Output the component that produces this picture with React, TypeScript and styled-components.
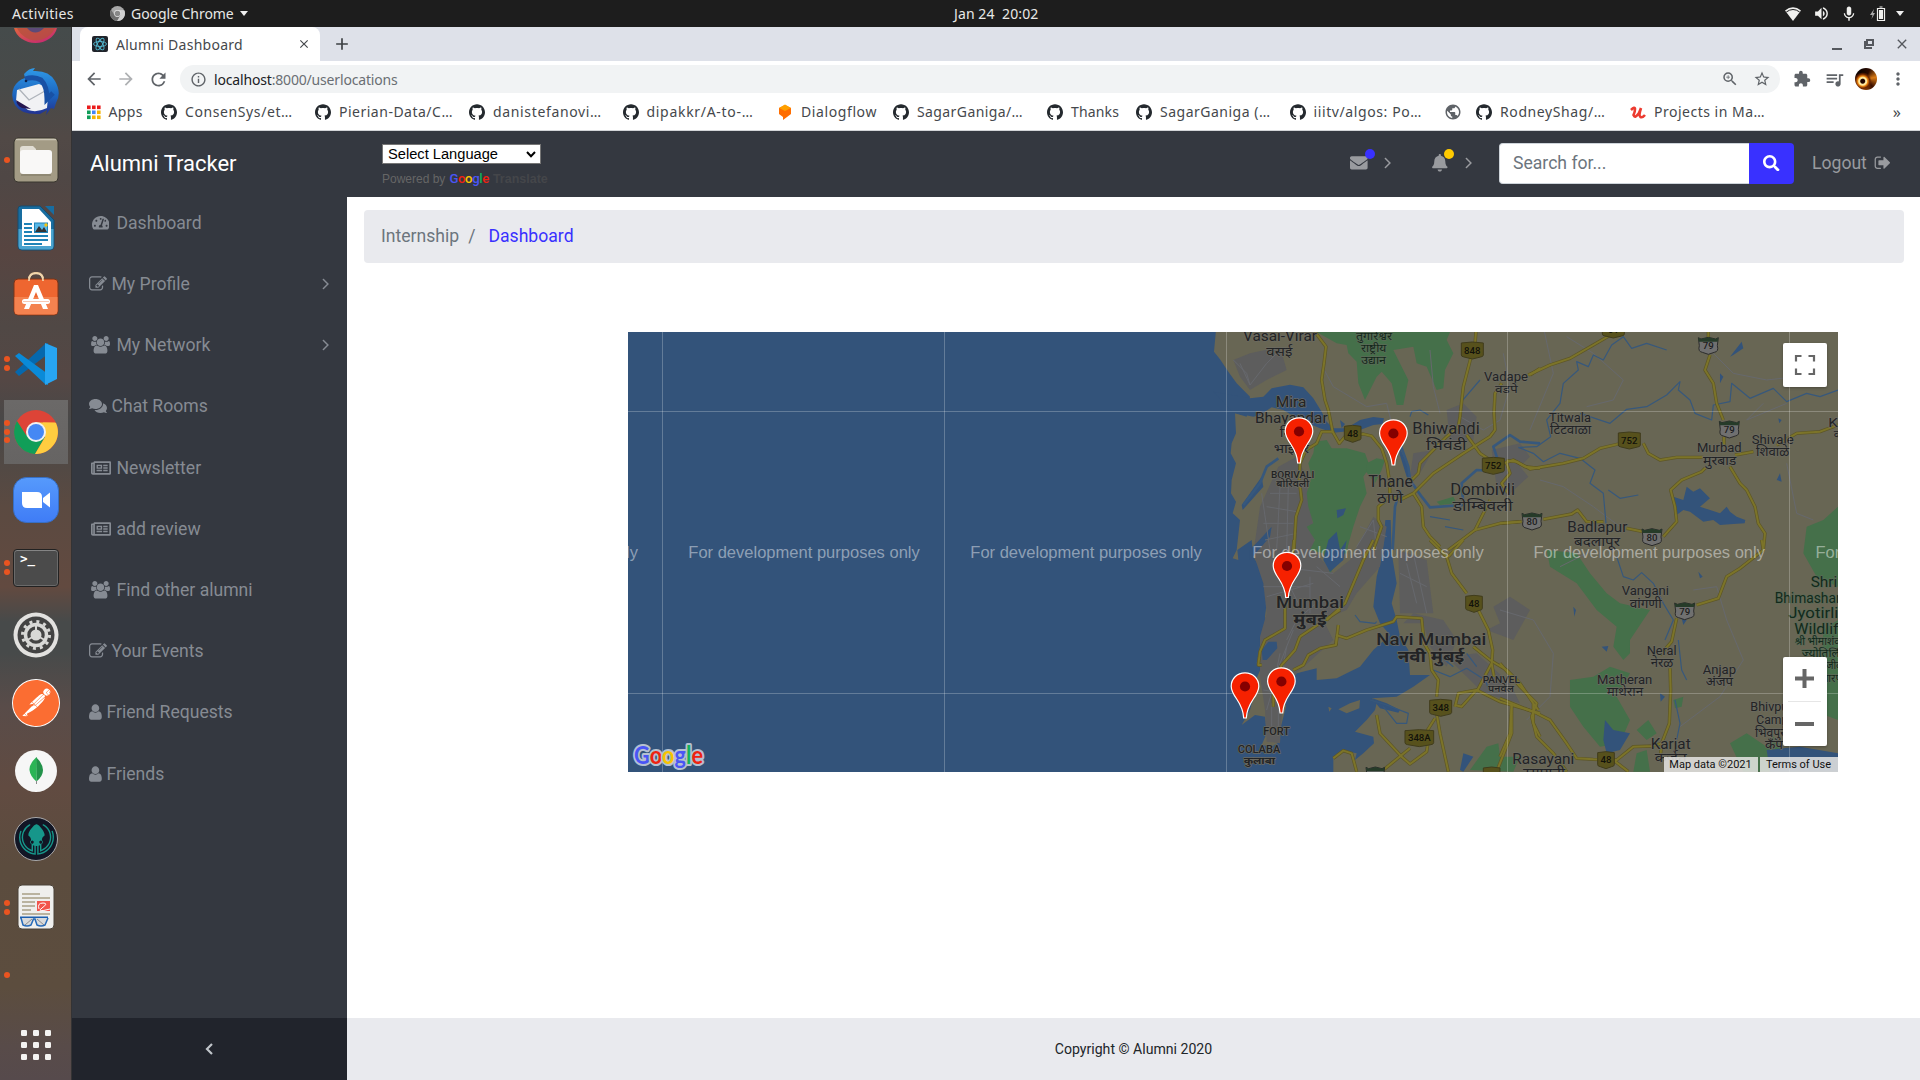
import React from "react";
import styled, { createGlobalStyle } from "styled-components";
import { FaBell, FaComments, FaEnvelope, FaRegNewspaper, FaSearch, FaTachometerAlt } from "react-icons/fa";
import {
  MdArrowBack, MdArrowForward, MdClose, MdExtension, MdInfoOutline, MdMic, MdMoreVert,
  MdPublic, MdQueueMusic, MdRefresh, MdStarBorder, MdVolumeUp, MdZoomIn, MdAdd,
} from "react-icons/md";
import { SiGithub, SiPostman, SiGitkraken } from "react-icons/si";

const UI = `"Noto Sans", "Open Sans", sans-serif`;
const APP = `Roboto, "Liberation Sans", sans-serif`;

const Global = createGlobalStyle`
  *, *::before, *::after { box-sizing: border-box; }
  html, body { margin: 0; background: #fff; }
  svg { display: block; flex: none; }
`;

const Desktop = styled.div`
  width: 1920px;
  height: 1080px;
  display: grid;
  grid-template: 27px 1053px / 72px 1848px;
  overflow: hidden;
  white-space: nowrap;
  font-family: ${UI};
`;

/* ---------- system bar ---------- */
const SystemBar = styled.header`
  grid-column: 1 / 3;
  display: grid;
  grid-template-columns: 954px 100px 1fr;
  align-items: center;
  background: #1d1d1d;
  color: #e8e8e6;
  font-size: 14px;
`;
const BarLeft = styled.div`
  display: flex;
  align-items: center;
  padding-left: 12px;
`;
const BarText = styled.span<{ $w?: number; $ls?: number }>`
  width: ${(p) => (p.$w ? `${p.$w}px` : "auto")};
  letter-spacing: ${(p) => p.$ls ?? 0}px;
  text-align: left;
  white-space: pre;
`;
const BarAppIcon = styled.span`
  margin: 0 6px 0 0;
`;
const Caret = styled.i<{ $ml: number }>`
  margin-left: ${(p) => p.$ml}px;
  border: 4.5px solid transparent;
  border-top: 5.5px solid #f0f0f0;
  border-bottom: 0;
`;
const Tray = styled.div`
  display: flex;
  align-items: center;
  justify-content: flex-end;
  padding-right: 16px;
  color: #f0f0ee;
`;
const TraySlot = styled.span<{ $w: number }>`
  width: ${(p) => p.$w}px;
  display: flex;
  justify-content: center;
`;

/* ---------- dock ---------- */
const Dock = styled.aside`
  display: flex;
  flex-direction: column;
  border-right: 1px solid #343334;
  background: linear-gradient(#454b4b 0, #484a49 60px, #514946 110px, #4f4745 150px, #574541 225px, #504845 300px,
    #554744 350px, #484848 395px, #5b4a41 480px, #624a40 560px, #474a4a 595px, #474a4a 625px, #594c49 680px,
    #614b41 760px, #5b4c3e 840px, #5c4d3e 960px, #584b49 1020px, #564a4c 1053px);
`;
const DockItem = styled.div<{ $h?: number; $on?: boolean }>`
  height: ${(p) => p.$h ?? 68}px;
  display: grid;
  grid-template-columns: 6px 60px;
  padding-left: 4px;
  align-items: center;
  background: ${(p) => (p.$on ? "linear-gradient(#6b6968,#666463) 4px 2px / 64px 64px no-repeat" : "none")};
`;
const Dots = styled.div`
  display: grid;
  gap: 2.7px;
  justify-items: start;
`;
const Dot = styled.i`
  width: 6px;
  height: 6px;
  border-radius: 50%;
  background: #ea5420;
`;
const DockArt = styled.div<{ $lift?: number }>`
  display: flex;
  justify-content: center;
  padding-right: 8px;
  padding-bottom: ${(p) => p.$lift ?? 0}px;
`;

/* ---------- browser ---------- */
const Browser = styled.main`
  display: grid;
  grid-template-rows: 34px 36px 34px 949px;
  min-width: 0;
`;
const TabStrip = styled.div`
  display: flex;
  align-items: center;
  padding-left: 8px;
  background: #dee1e9;
  color: #3c4043;
`;
const Tab = styled.div`
  width: 240px;
  height: 34px;
  display: flex;
  align-items: center;
  padding: 0 9px 0 12px;
  border-radius: 8px 8px 0 0;
  background: #fff;
  font-size: 14px;
  color: #45484c;
`;
const TabTitle = styled.span`
  flex: 1;
  margin-left: 8px;
  letter-spacing: 0.27px;
`;
const NewTab = styled.div`
  margin-left: 12px;
  flex: 1;
`;
const WinControls = styled.div`
  display: flex;
  gap: 17px;
  padding-right: 10px;
  color: #55585e;
`;
const Toolbar = styled.div`
  display: flex;
  align-items: center;
  padding-left: 12px;
  background: #fff;
  color: #5f6368;
`;
const ToolSlot = styled.span<{ $w?: number; $faded?: boolean }>`
  width: ${(p) => p.$w ?? 32}px;
  display: flex;
  justify-content: center;
  opacity: ${(p) => (p.$faded ? 0.5 : 1)};
`;
const Omnibox = styled.div`
  width: 1600px;
  height: 28px;
  margin: 0 6px 0 6px;
  display: flex;
  align-items: center;
  padding: 0 2px 0 10px;
  border-radius: 14px;
  background: #f1f3f4;
`;
const Url = styled.span`
  flex: 1;
  margin-left: 7px;
  font-size: 14px;
  letter-spacing: -0.17px;
  color: #6a6e73;
  b { font-weight: 400; color: #202124; }
`;
const Avatar = styled.i`
  width: 22px;
  height: 22px;
  border-radius: 50%;
  background: radial-gradient(circle at 35% 60%, #200400 0 2px, #ffe9a0 3px 4px, #f28a12 5px, #6b2400 7px, transparent 9px),
    conic-gradient(from 20deg, #2a0a00, #d97a14, #3a0f00, #a8520c, #1c0400, #0c0200, #2a0a00);
`;
const Bookmarks = styled.nav`
  display: flex;
  align-items: center;
  padding: 0 0 4px 14.5px;
  border-bottom: 1px solid #d3d5d8;
  background: #fff;
  color: #45484c;
  font-size: 14px;
`;
const Bookmark = styled.span<{ $w: number; $ls?: number }>`
  width: ${(p) => p.$w}px;
  display: flex;
  align-items: center;
  gap: 8px;
  letter-spacing: ${(p) => p.$ls ?? 0}px;
`;
const More = styled.span`
  margin-left: auto;
  padding-right: 19px;
  font-size: 16px;
`;

/* ---------- application ---------- */
const Page = styled.div`
  display: grid;
  grid-template: 66px 821px 62px / 275px 1573px;
  font-family: ${APP};
  font-size: 17.6px;
  background: #fff;
`;
const Navbar = styled.header`
  grid-column: 1 / 3;
  display: flex;
  align-items: center;
  padding: 0 0 2px 18px;
  background: #343840;
  color: #999b9f;
`;
const Brand = styled.h1`
  width: 292px;
  margin: 0;
  font-size: 22px;
  font-weight: 400;
  color: #fff;
`;
const Translate = styled.div`
  width: 968px;
  height: 42px;
  display: flex;
  flex-direction: column;
  align-items: flex-start;
  padding-top: 2px;
  font: 12px "Liberation Sans", Arial, sans-serif;
  color: #666;
`;
const Select = styled.div`
  width: 159px;
  height: 20px;
  flex: none;
  display: flex;
  align-items: center;
  justify-content: space-between;
  padding: 0 4px 0 5px;
  border: 1px solid #767676;
  background: #fff;
  color: #000;
  font-size: 14.67px;
`;
const Powered = styled.div`
  display: flex;
  align-items: baseline;
  margin-top: 7px;
`;
const MiniGoogle = styled.span`
  margin: 0 4px 0 4px;
  font: 500 13.2px Roboto, sans-serif;
  letter-spacing: -0.4px;
`;
const Tint = styled.span<{ $c: string }>`
  color: ${(p) => p.$c};
`;
const TranslateWord = styled.b`
  color: #44464a;
  font-size: 12.5px;
`;
const Notice = styled.div<{ $w: number; $gap: number }>`
  width: ${(p) => p.$w}px;
  display: flex;
  align-items: center;
  gap: ${(p) => p.$gap}px;
`;
const IconWithBadge = styled.span`
  position: relative;
`;
const Badge = styled.i<{ $c: string; $x: number; $y: number }>`
  position: absolute;
  left: ${(p) => p.$x}px;
  top: ${(p) => p.$y}px;
  width: 10px;
  height: 10px;
  border-radius: 50%;
  background: ${(p) => p.$c};
`;
const SearchBox = styled.div`
  width: 250px;
  height: 41px;
  display: flex;
  align-items: center;
  padding-left: 13px;
  border: 1px solid #ced4da;
  border-right: 0;
  border-radius: 4px 0 0 4px;
  background: #fff;
  color: #6c757d;
`;
const SearchButton = styled.div`
  width: 45px;
  height: 41px;
  display: flex;
  align-items: center;
  justify-content: center;
  border-radius: 0 4px 4px 0;
  background: #3931ff;
  color: #fff;
`;
const Logout = styled.div`
  display: flex;
  align-items: center;
  gap: 7px;
  margin-left: 18px;
`;
const Sidebar = styled.nav`
  background: #343840;
  color: #868b93;
`;
const NavItem = styled.a`
  height: 61.2px;
  display: flex;
  align-items: center;
  padding: 0 17px 9.5px 17px;
`;
const NavIcon = styled.span<{ $w: number }>`
  width: ${(p) => p.$w}px;
  display: flex;
  justify-content: center;
  margin-right: 4.5px;
`;
const NavLabel = styled.span`
  flex: 1;
`;
const Content = styled.section`
  display: flex;
  flex-direction: column;
  padding: 13px 16px 0 17px;
`;
const Breadcrumb = styled.div`
  height: 53px;
  display: flex;
  align-items: center;
  gap: 9px;
  padding: 0 17px 2px;
  border-radius: 4px;
  background: #e9eaee;
  color: #6c757d;
`;
const Current = styled.span`
  margin-left: 4px;
  color: #3931ff;
`;
const MapFrame = styled.div`
  position: relative;
  width: 1210px;
  height: 440px;
  margin: 69px 0 0 264px;
  overflow: hidden;
  font-family: ${APP};
`;
const MapButtons = styled.div<{ $y: number; $h: number }>`
  position: absolute;
  left: 1155px;
  top: ${(p) => p.$y}px;
  width: 44px;
  height: ${(p) => p.$h}px;
  border-radius: 2px;
  background: #fff;
  box-shadow: 0 1px 3px rgba(0, 0, 0, 0.3);
`;
const Legal = styled.div`
  position: absolute;
  right: 0;
  bottom: 0;
  height: 15px;
  display: flex;
  gap: 2px;
  font-size: 11px;
  line-height: 15.5px;
  color: #111;
`;
const LegalCell = styled.span<{ $w: number }>`
  width: ${(p) => p.$w}px;
  padding-right: 1px;
  text-align: center;
  background: rgba(228, 228, 226, 0.86);
`;
const Toggle = styled.div`
  display: flex;
  align-items: center;
  justify-content: center;
  background: #21242c;
  color: #c0c5ca;
`;
const Footer = styled.footer`
  display: flex;
  align-items: center;
  justify-content: center;
  background: #e9eaee;
  color: #212529;
  font-size: 14.1px;
`;

/* ---------- glyphs ---------- */
const EDIT = "M888 1184l116-116-152-152-116 116v56h96v96h56zm440-720q-16-16-33 1l-350 350q-17 17-1 33t33-1l350-350q17-17 1-33zm80 594v190q0 119-84.5 203.5t-203.5 84.5h-832q-119 0-203.5-84.5t-84.5-203.5v-832q0-119 84.5-203.5t203.5-84.5h832q63 0 117 25 15 7 18 23 3 17-9 29l-49 49q-14 14-32 8-23-6-45-6h-832q-66 0-113 47t-47 113v832q0 66 47 113t113 47h832q66 0 113-47t47-113v-126q0-13 9-22l64-64q15-15 35-7t20 29zm-96-738l288 288-672 672h-288v-288zm444 132l-92 92-288-288 92-92q28-28 68-28t68 28l152 152q28 28 28 68t-28 68z";
const USER = "M1536 1399q0 109-62.5 187t-150.5 78h-854q-88 0-150.5-78t-62.5-187q0-85 8.5-160.5t31.5-152 58.5-131 94-89 134.5-34.5q131 128 313 128t313-128q76 0 134.5 34.5t94 89 58.5 131 31.5 152 8.5 160.5zm-256-887q0 159-112.5 271.5t-271.5 112.5-271.5-112.5-112.5-271.5 112.5-271.5 271.5-112.5 271.5 112.5 112.5 271.5z";
const USERS = "M593 896q-162 5-265 128h-134q-82 0-138-40.5t-56-118.5q0-353 124-353 6 0 43.5 21t97.5 42.5 119 21.5q67 0 133-23-5 37-5 66 0 159 93 256zm1071 637q0 120-73 189.5t-194 69.5h-874q-121 0-194-69.5t-73-189.5q0-53 3.5-103.5t14-109 26.5-108.5 43-97.5 62-81 85.5-53.5 111.5-20q10 0 43 21.5t73 48 107 48 135 21.5 135-21.5 107-48 73-48 43-21.5q61 0 111.5 20t85.5 53.5 62 81 43 97.5 26.5 108.5 14 109 3.5 103.5zm-1024-1277q0 106-75 181t-181 75-181-75-75-181 75-181 181-75 181 75 75 181zm704 384q0 159-112.5 271.5t-271.5 112.5-271.5-112.5-112.5-271.5 112.5-271.5 271.5-112.5 271.5 112.5 112.5 271.5zm576 225q0 78-56 118.5t-138 40.5h-134q-103-123-265-128 93-97 93-256 0-29-5-66 66 23 133 23 59 0 119-21.5t97.5-42.5 43.5-21q124 0 124 353zm-128-609q0 106-75 181t-181 75-181-75-75-181 75-181 181-75 181 75 75 181z";
const SIGN_OUT = "M704 1440q0 4 1 20t.5 26.5-3 23.5-10 19.5-20.5 6.5h-320q-119 0-203.5-84.5t-84.5-203.5v-704q0-119 84.5-203.5t203.5-84.5h320q13 0 22.5 9.5t9.5 22.5q0 4 1 20t.5 26.5-3 23.5-10 19.5-20.5 6.5h-320q-66 0-113 47t-47 113v704q0 66 47 113t113 47h312l11.5 1 11.5 3 8 5.5 7 9 2 13.5zm928-544q0 26-19 45l-544 544q-19 19-45 19t-45-19-19-45v-288h-448q-26 0-45-19t-19-45v-384q0-26 19-45t45-19h448v-288q0-26 19-45t45-19 45 19l544 544q19 19 19 45z";
const ANGLE = "M1171 960q0 13-10 23l-466 466q-10 10-23 10t-23-10l-50-50q-10-10-10-23t10-23l393-393-393-393q-10-10-10-23t10-23l50-50q10-10 23-10t23 10l466 466q10 10 10 23z";

const Glyph = ({ d, box = "0 0 1792 1792", w, h }: { d: string; box?: string; w: number; h: number }) => (
  <svg width={w} height={h} viewBox={box} fill="currentColor"><path d={d} /></svg>
);
const Edit = () => <Glyph d={EDIT} w={18} h={18} />;
const User = () => <Glyph d={USER} box="256 0 1280 1792" w={12.8} h={18} />;
const Users = () => <Glyph d={USERS} box="0 0 1920 1792" w={19} h={17.6} />;
const Angle = () => <Glyph d={ANGLE} box="540 310 700 1300" w={7.6} h={14} />;

const ChromeMark = ({ size, gray }: { size: number; gray?: boolean }) => {
  const c = gray ? ["#a8a8a8", "#6f6f6f", "#d0d0d0", "#888", "#e5e5e5"] : ["#dd4437", "#119e58", "#ffcd40", "#4588f4", "#f1f1f1"];
  return (
    <svg width={size} height={size} viewBox="0 0 44 44">
      <circle cx="22" cy="22" r="22" fill={c[0]} />
      <path d="M3 11 A22 22 0 0 0 21 44 L31 27 L22 22 L12 25Z" fill={c[1]} />
      <path d="M42 13 A22 22 0 0 1 21 44 L31 27 L29 12.500Z" fill={c[2]} />
      <path d="M22 12.500H42L29 19Z" fill={c[2]} />
      <circle cx="22" cy="22" r="10" fill={c[4]} />
      <circle cx="22" cy="22" r="8" fill={c[3]} />
    </svg>
  );
};

/* ---------- dock artwork ---------- */
const Fox = () => (
  <svg width="44" height="20" viewBox="0 0 44 20">
    <defs><linearGradient id="fx" x2="1" y2="1"><stop stopColor="#e0663e" /><stop offset="1" stopColor="#c2207a" /></linearGradient></defs>
    <path d="M0 0A22 19 0 0 0 43 0Z" fill="url(#fx)" />
    <path d="M3 0C8 10 18 14 26 12S38 6 41 0Z" fill="#b5503f" opacity=".8" />
    <path d="M13 0Q21 9 30 0Z" fill="#5c4a78" />
  </svg>
);
const Bird = () => (
  <svg width="50" height="50" viewBox="0 0 50 50">
    <defs><linearGradient id="tb" x2="0" y2="1"><stop stopColor="#2f9ae8" /><stop offset=".6" stopColor="#1b62bd" /><stop offset="1" stopColor="#23308f" /></linearGradient></defs>
    <path d="M13 7Q18 1 24 1L22 4Q38 3 44 14Q51 26 45 36L43 42L40 41L35 48L36 43L29 47Q10 48 4 38Q-1 29 3 20Q7 13 14 11Z" fill="url(#tb)" />
    <path d="M6 23L28 17Q38 20 37 30L36 41Q26 46 17 43L5 34Z" fill="#f1f2f4" />
    <path d="M8 22L18 33L34 24" fill="none" stroke="#aeb3ba" strokeWidth="1.300" />
    <path d="M5 33L20 42L11 41Q6 39 5 33" fill="#26164f" />
    <path d="M14 12Q23 9 30 13Q36 19 36 32L42 26" fill="none" stroke="#1851a5" strokeWidth="5" />
    <circle cx="15" cy="14" r="1.300" fill="#0c214e" />
  </svg>
);
const Files = () => (
  <svg width="46" height="46" viewBox="0 0 46 46">
    <rect x="1" y="1" width="44" height="44" rx="4" fill="#a39b85" stroke="#39362f" />
    <path d="M3 2.500H43" stroke="#c9c4b4" strokeWidth="1.500" />
    <path d="M7 13V12Q7 9 10 9H20L23 12V18H7Z" fill="#e1ddd3" />
    <rect x="7" y="13" width="32" height="24" rx="3" fill="#f9f8f7" />
    <path d="M8 38H38" stroke="#7d7662" />
  </svg>
);
const Writer = () => (
  <svg width="40" height="46" viewBox="0 0 40 46">
    <path d="M5 1H24L38 15V41Q38 45 34 45H6Q2 45 2 41V4Q2 1 5 1Z" fill="#186da0" stroke="#174c6e" />
    <path d="M2.500 24H37.500V41Q37.500 44.500 34 44.500H6Q2.500 44.500 2.500 41Z" fill="#4aa3cf" />
    <path d="M29 1H38V10Z" fill="#186da0" />
    <path d="M6 4H23L35 17V41H6Z" fill="#fff" />
    <path d="M8 19H16M8 23H16M8 27H16M8 31H32M8 35H32M8 39H26" stroke="#1f83b7" strokeWidth="2" />
    <rect x="18.500" y="18" width="13" height="9.500" fill="#58b8e8" stroke="#1f83b7" />
    <path d="M19 27L23 21L26 25L28 22L31 27Z" fill="#333" />
    <circle cx="30" cy="20" r="1.700" fill="#f5c211" />
  </svg>
);
const Software = () => (
  <svg width="46" height="44" viewBox="0 0 46 44">
    <path d="M16 12V8Q16 1 23 1T30 8V12" fill="none" stroke="#e9c79b" strokeWidth="2.200" />
    <rect x="1" y="7" width="44" height="36" rx="4" fill="#ee6630" stroke="#7a3418" />
    <path d="M1.500 25H44.500V39Q44.500 42.500 41 42.500H5Q1.500 42.500 1.500 39Z" fill="#f4824f" />
    <path d="M16 9V8Q16 1.500 23 1.500T30 8V9" fill="none" stroke="#f2d7ae" strokeWidth="1.600" />
    <path d="M21 13H25L35 37H30L23 20L16 37H11Z" fill="#fff" />
    <rect x="9" y="27" width="28" height="5" rx="2.500" fill="#fff" />
    <path d="M10 29.500H36" stroke="#f8c9b4" />
  </svg>
);
const Code = () => (
  <svg width="44" height="44" viewBox="0 0 44 44">
    <path d="M1 30L5 34L34 12V1L31 2Z" fill="#0668ad" />
    <path d="M1 14L5 11L34 32V43L31 42Z" fill="#0a8ad8" />
    <path d="M31 1L43 6V37L31 43Z" fill="#27a5f2" />
  </svg>
);
const Zoom = () => (
  <svg width="46" height="46" viewBox="0 0 46 46">
    <defs><linearGradient id="zm" x2="0" y2="1"><stop stopColor="#569afc" /><stop offset="1" stopColor="#3f7cf6" /></linearGradient></defs>
    <rect x=".5" y=".5" width="45" height="45" rx="13" fill="url(#zm)" stroke="#376fc4" />
    <path d="M9 15H24Q29 15 29 20V31H14Q9 31 9 26Z" fill="#fff" />
    <path d="M30 21L37 15.500V30.500L30 25Z" fill="#fff" />
  </svg>
);
const TermBox = styled.div`
  width: 46px;
  height: 38px;
  padding: 1px 0 0 6px;
  border: 1px solid #222;
  border-radius: 4px;
  background: #4b4b4b;
  box-shadow: inset 0 1px 0 #858585, inset 0 0 0 1px #6a6a6a;
  color: #fff;
  font: bold 12.5px/16px "DejaVu Sans Mono", monospace;
`;
const Settings = () => (
  <svg width="46" height="46" viewBox="0 0 46 46">
    <circle cx="23" cy="23" r="22.500" fill="#e2e1df" />
    <circle cx="23" cy="23" r="18.500" fill="#434343" />
    <circle cx="23" cy="23" r="13.500" fill="none" stroke="#d8d8d6" strokeWidth="3" strokeDasharray="3 4.068" />
    <circle cx="23" cy="23" r="10.500" fill="none" stroke="#d8d8d6" strokeWidth="3.500" />
    <path d="M23 23V12M23 23L32.500 28.500M23 23L13.500 28.500" stroke="#d8d8d6" strokeWidth="2" />
    <circle cx="23" cy="23" r="5.500" fill="#d8d8d6" />
  </svg>
);
const PostmanDisc = styled.div`
  width: 48px;
  height: 48px;
  display: grid;
  place-items: center;
  border-radius: 50%;
  background: #fff;
  color: #fb6d32;
`;
const Mongo = () => (
  <svg width="42" height="42" viewBox="0 0 42 42">
    <circle cx="21" cy="21" r="21" fill="#f6f6f6" />
    <path d="M21 7Q28 14 28 20T21.500 31.500Z" fill="#22924a" />
    <path d="M21.500 7Q14 14 14.500 20T21.500 31.500Z" fill="#2bb456" />
    <path d="M21.500 31V34" stroke="#8a8a8a" />
  </svg>
);
const KrakenDisc = styled.div`
  width: 44px;
  height: 44px;
  display: grid;
  place-items: center;
  border: 1px solid #a9a9ab;
  border-radius: 50%;
  background: #121625;
  color: #16968a;
`;
const Reader = () => (
  <svg width="38" height="46" viewBox="0 0 38 46">
    <rect x="1" y="1" width="36" height="44" rx="4" fill="#efefed" stroke="#4b4238" />
    <path d="M5 10H23M5 14H33M5 18H18M5 22H18M5 26H14M5 30H33" stroke="#bab39f" strokeWidth="1.800" />
    <rect x="20" y="17" width="13" height="10" fill="#f2554c" />
    <path d="M22 25Q20 19 26 19T25 24T33 25" fill="none" stroke="#fff" />
    <path d="M3 33.500H31" stroke="#1d5fae" strokeWidth="2" />
    <path d="M4 34L6 41Q10 43 14 41L16.500 35H18L20 41Q24 43 28 41L31 34" fill="#d8dadc" stroke="#2469b8" strokeWidth="1.500" />
    <path d="M8 41L15 35M20 35L27 41" stroke="#777" strokeWidth=".8" />
  </svg>
);
const Grid = () => (
  <svg width="32" height="32" viewBox="0 0 32 32" fill="#f4f3f1">
    {[0, 12, 24].map((y) => [0, 12, 24].map((x) => <rect key={`${x}-${y}`} x={x + 1} y={y + 1} width="6" height="6" rx="1.300" />))}
  </svg>
);

const dock: { art: React.ReactNode; dots: number; lift?: number; on?: boolean }[] = [
  { art: <Bird />, dots: 0 },
  { art: <Files />, dots: 1 },
  { art: <Writer />, dots: 0 },
  { art: <Software />, dots: 0, lift: 4 },
  { art: <Code />, dots: 2 },
  { art: <ChromeMark size={44} />, dots: 3, on: true },
  { art: <Zoom />, dots: 0 },
  { art: <TermBox>&gt;_</TermBox>, dots: 2 },
  { art: <Settings />, dots: 0 },
  { art: <PostmanDisc><SiPostman size={46} /></PostmanDisc>, dots: 0 },
  { art: <Mongo />, dots: 0 },
  { art: <KrakenDisc><SiGitkraken size={35} /></KrakenDisc>, dots: 0 },
  { art: <Reader />, dots: 2 },
  { art: null, dots: 1 },
];

/* ---------- bookmarks ---------- */
const AppsGrid = () => (
  <svg width="14" height="16" viewBox="0 0 14 16">
    {["#ea1c1c", "#ea1c1c", "#ea1c1c", "#0f9d58", "#4285f4", "#f4b400", "#0f9d58", "#f4b400", "#f4b400"].map((c, i) => (
      <rect key={i} x={(i % 3) * 5} y={1.500 + Math.floor(i / 3) * 5} width="3.600" height="3.600" fill={c} />
    ))}
  </svg>
);
const Flow = () => (
  <svg width="16" height="16" viewBox="0 0 16 16">
    <path d="M2 4L8 1L14 4V10L6 16V13L2 10Z" fill="#ff6d00" />
    <path d="M2 4L8 .5L14 4L8 7Z" fill="#ffa000" />
  </svg>
);
const Udemy = () => (
  <svg width="16" height="16" viewBox="0 0 16 16" fill="none" stroke="#ec3b30" strokeWidth="2.600">
    <path d="M1 6Q5 2 5 5T3.500 11Q5 15 9 9L11 4Q8.500 12 10.500 13T15 11" />
  </svg>
);
const gh = <SiGithub size={16} color="#24292e" />;
const marks: [React.ReactNode, string, number, number][] = [
  [<AppsGrid />, "Apps", 74.5, 0.4],
  [gh, "ConsenSys/et…", 154, 0.6],
  [gh, "Pierian-Data/C…", 154, 0.5],
  [gh, "danistefanovi…", 153.5, 0.65],
  [gh, "dipakkr/A-to-…", 154.5, 0.7],
  [<Flow />, "Dialogflow", 116, 0.6],
  [gh, "SagarGaniga/…", 154, 0.4],
  [gh, "Thanks", 89, 0.15],
  [gh, "SagarGaniga (…", 153.5, 0.5],
  [gh, "iiitv/algos: Po…", 154.5, 0.6],
  [<MdPublic size={18} color="#5f6368" />, "", 32, 0],
  [gh, "RodneyShag/…", 154, 0.6],
  [<Udemy />, "Projects in Ma…", 140, 0.5],
];

/* ---------- map: drawn at three units per pixel, split in four sheets ---------- */
const ROADS: [number, number, string[]][] = [
  [0, 0, [
    "M345 36L378 80L372 130L365 180L375 240L385 270L398 335L365 335L350 370L318 390L300 430L298 480L305 540L288 590L282 690",
    "M398 335L418 370L435 350L490 342L515 348L545 385L560 430L568 480L570 530",
    "M828 36L825 70M812 115L790 200L780 290L775 320L740 350L690 400L660 430L655 460L635 480",
    "M1020 145L990 165M905 190L885 220L882 280L885 330L870 350L790 400L700 460L640 520L600 540",
    "M800 345L840 400L870 420M910 430L940 420L975 440L1020 445M920 430L930 460L905 490L925 520M870 540L825 630L745 690",
    "M825 630L900 610L965 605M640 520L665 560L670 620L690 650L720 680M570 530L535 560L535 600L545 620L520 690M600 540L575 530",
  ]],
  [900, 0, [
    "M340 40L280 75L210 115L150 135L85 165",
    "M625 36V60M630 105L615 150L640 190L650 250L670 300M672 350V380M610 412L530 412L480 420L445 400L430 370M355 372L300 385L250 415L190 430L90 447L50 425L20 422",
    "M705 405L760 395M830 375L890 340L960 335L1014 315",
    "M690 440L720 490L740 510L765 560L775 610L795 640L790 690",
    "M0 610L60 605M130 598L215 582L233 570L260 605L310 605M380 625L430 635M490 650L530 605L525 560L512 510L545 480L605 455L620 440",
  ]],
  [0, 660, [
    "M282 0L278 40M255 190V265L195 300L180 335L175 375L185 375M300 290L420 210M520 0L490 60L435 190L380 240M415 255L408 315L360 325L325 345L310 375L280 390M300 290L285 330L245 375L220 430M220 440V500",
    "M408 285L440 295L500 270L580 245L590 230L665 235L672 310L690 340L695 390L715 420L710 470M410 290L408 315",
    "M690 0L740 50L755 100L800 160M835 210L865 270L878 330L875 370L830 455",
    "M820 320L870 360L920 390L960 430L1000 490L1015 510M765 500L775 460L830 450L900 485L1020 520M765 495L785 500L830 450M875 370L882 410M935 490L935 580L890 695M1000 490L1000 550L1020 590",
    "M710 520L720 580L745 695M705 535L670 590M630 625L550 690M530 525L540 580L605 650L630 672L680 635L685 600M470 695L455 640L430 632L400 655M745 50L790 0",
  ]],
  [900, 660, [
    "M785 0L790 30L720 85L680 110L655 175L590 195M530 235L515 305L480 345M510 385L512 450L508 550L485 610L460 618L400 620L350 660L280 658L230 655L200 610L150 540L110 520L0 475",
    "M0 370L60 440L110 490L95 530L110 590L160 640L200 695M35 490L30 580L0 650M340 660L385 695M485 610L480 660",
  ]],
];
const WATERWAYS: [number, number, string[]][] = [
  [0, 0, ["M600 370L625 440L630 480L665 530L690 562L790 555L785 490L830 450L905 455L880 380L930 345L960 365L1020 370", "M235 415L200 440L180 490L130 555", "M600 510L585 560L578 690"]],
  [0, 0, ["M690 590L750 600M735 620L790 630M780 250L840 180M630 290L635 275L660 270L685 285"]],
  [900, 0, ["M60 382L110 380L152 350L140 300L180 250L190 190L235 150L230 125L265 140L280 105L310 120L335 75L370 50L395 85L440 70L500 90M55 382L100 400L130 425L180 400L240 415L285 450L270 490L310 520L318 610M240 280L330 310L380 268L440 260L500 225L540 185L535 210L570 240L585 280L635 300L640 255L690 245L695 190L750 235L820 205L860 245L920 220L960 230L1014 210M325 510L360 535L415 525"]],
  [0, 660, ["M465 225L480 245L525 250L530 245M700 390L750 410L800 385L855 420L870 455M510 480L560 495L625 520L620 550L590 550L550 500M710 340L760 380M800 340L830 380"]],
  [900, 660, ["M350 50L370 110L400 120L425 98L460 130L490 190L520 240L495 300M535 300L545 390L560 420M525 480L540 550L530 600"]],
];
const LANES = [
  "M185 520L210 690M210 520H290M200 560L290 575M190 610H280M240 500L230 690M265 500L260 690M195 660L290 640M480 620L560 650M470 680L520 600L530 690",
  "M190 800H330M200 830L340 790M250 760L300 860M230 740L400 760M330 770V880M260 960L290 900L360 840M240 1000L220 1100L200 1170M260 980L240 1090M280 930L220 1080M190 1110L250 1120M215 1150V1240M235 1140V1230M350 740L420 800M620 730L650 850M640 700L680 880M600 760L680 800",
  "M120 130L150 195L200 130L240 90M150 195L140 160L100 120M370 145L400 200L500 260L560 250L580 330M690 90L700 200L720 280M780 290L850 330L900 300L930 200L910 100M1030 20L1060 160L990 330M1100 50L1180 100L1270 180L1240 240L1160 260M1530 90L1600 160L1700 180L1790 170M1690 250L1640 300L1760 250M1020 480L1090 500L1180 560L1260 620M1760 430L1790 580L1840 600M1480 810L1550 800L1580 900L1630 1020L1560 1130L1440 1220M900 870L1000 900L1060 1000L1050 1130L980 1200M1080 740L1180 690",
];
const GREENS = [
  "M350 36L410 70L440 75L445 100L470 125L475 190L495 240L530 170L545 155L575 190L590 255H610L625 180L580 90L640 80L650 130L680 140L710 210L730 205L735 150L760 100L740 60L750 36Z",
  "M345 365L380 360L395 385L440 385L495 400L510 440L490 470L500 520L480 560L460 620L440 690L390 760L370 700L330 690L345 660L320 620L340 610L325 560L320 520L335 470L325 430L340 400Z",
  "M498 455L500 430L530 415L555 420L545 450L525 490Z",
  "M1820 620L1870 600L1914 560V800L1850 770L1810 700Z",
  "M1050 740L1040 690L1090 695L1130 700L1170 760L1220 820L1260 850L1350 870L1290 960L1290 1000L1270 1020L1240 980L1250 920L1190 870L1130 790Z",
  "M1110 1080L1180 1070L1230 1040L1290 1060L1250 1130L1290 1200L1260 1270L1200 1280L1150 1220L1110 1160Z",
  "M810 1350L860 1280L895 1270L900 1310L960 1310L940 1355Z M1300 1355L1310 1300L1340 1290L1350 1355Z M1590 1270L1640 1240L1700 1280L1720 1250L1760 1300L1720 1355H1630Z",
  "M1420 1140L1450 1130L1445 1160L1425 1165Z M1310 1230L1345 1200L1370 1240L1340 1260Z M710 545L760 530L770 550L720 555Z",
  "M1800 1130L1820 1110L1840 1170L1810 1160ZM1870 930L1914 900V1200L1860 1180Z M355 660L445 670L440 700L380 710Z",
];
const TOWNS = [
  "M100 120L150 100L240 80L260 150L200 180L150 210L120 170Z",
  "M235 440L290 410L320 470L325 540L345 640L340 690L400 760L450 720L520 590L560 620L540 740L470 820L440 870L370 900L400 960L290 1060L250 1110L240 1270L200 1265L195 1170L180 1070L180 950L200 880L190 790L160 700L180 560Z",
  "M595 690L680 720L700 880L600 880ZM610 910L670 910L690 980L740 1040L770 960L730 900L640 880Z",
  "M640 400L700 390L660 460L630 470ZM740 270L790 250L830 290L820 360L750 370ZM875 390L960 370L990 410L960 440L985 470L920 530L890 500ZM740 1010L830 1000L930 1090L960 1150L850 1120Z",
  "M880 860L900 910L860 930L940 960L990 870L930 830Z",
];
const LAKES = [
  "M410 570L438 565L430 585L412 595ZM385 660L410 635L420 690L440 660L430 720L390 755L370 720Z",
  "M1420 530L1450 540L1460 500L1480 515L1500 505L1530 535L1500 560L1560 580L1580 560L1590 575L1610 590L1636 600L1634 610L1600 612L1560 615L1540 600L1510 605L1470 575L1450 570L1430 585Z",
  "M1215 1200L1240 1230L1290 1240L1260 1290L1220 1300L1210 1260ZM1590 110L1625 65L1630 85L1600 105ZM780 1350L790 1300L820 1310L790 1355ZM1700 1290L1800 1280L1914 1300V1355H1710Z",
  "M1560 160L1570 170L1560 190ZM1730 480L1740 460L1745 485ZM1735 295L1745 300L1738 310ZM1205 980L1225 978L1220 995ZM1120 860L1128 870L1123 890ZM1445 895L1460 900L1450 915ZM1380 1120L1395 1130L1382 1145ZM1495 755L1508 770L1500 775Z",
];

/* [x, y, text, size, width, weight, tone] in sheet units */
type Label = [number, number, string, number, number, number?, string?];
const LABELS: Label[] = [
  [240, 62, "Vasai-Virar", 42, 222], [238, 107, "वसई", 40, 78],
  [522, 60, "तुगारेश्वर", 32, 108, 400, "g"], [521, 97, "राष्ट्रीय", 32, 76, 400, "g"], [521, 132, "उद्यान", 32, 74, 400, "g"],
  [918, 184, "Vadape", 37, 132], [919, 220, "वडपे", 35, 68],
  [273, 262, "Mira", 46, 92], [274, 309, "Bhayandar", 46, 218], [272, 350, "मिरा", 40, 66], [274, 398, "भाईंदर", 40, 106],
  [738, 342, "Bhiwandi", 47, 202], [739, 390, "भिवंडी", 44, 122],
  [278, 474, "BORIVALI", 28, 130, 500], [278, 502, "बोरिवली", 26, 98, 500],
  [572, 502, "Thane", 48, 134], [570, 550, "ठाणे", 44, 78],
  [848, 525, "Dombivli", 48, 194], [848, 572, "डोम्बिवली", 44, 180],
  [1110, 306, "Titwala", 39, 126], [1112, 343, "टिटवाळा", 36, 124],
  [1558, 396, "Murbad", 39, 134], [1559, 434, "मुरबाड", 36, 100],
  [1718, 372, "Shivale", 39, 126], [1718, 409, "शिवाळे", 36, 100],
  [1912, 322, "Ka", 39, 54], [1914, 354, "क", 34, 26],
  [1192, 636, "Badlapur", 45, 180], [1191, 679, "बदलापूर", 40, 138],
  [330, 865, "Mumbai", 52, 204, 500], [330, 916, "मुंबई", 48, 100, 700],
  [694, 975, "Navi Mumbai", 52, 330, 500], [693, 1027, "नवी मुंबई", 48, 200, 700],
  [230, 1245, "FORT", 33, 80, 500], [177, 1299, "COLABA", 33, 128, 500], [178, 1331, "कुलाबा", 28, 94, 700],
  [904, 1090, "PANVEL", 29, 112, 500], [903, 1116, "पनवेल", 26, 78, 500],
  [1030, 1332, "Rasayani", 44, 186], [1032, 1372, "रसायनी", 40, 126],
  [1336, 826, "Vangani", 39, 142], [1337, 863, "वांगणी", 36, 96],
  [1385, 1005, "Neral", 39, 90], [1386, 1042, "नेरळ", 36, 68],
  [1274, 1091, "Matheran", 39, 166], [1275, 1127, "माथेरान", 36, 110],
  [1558, 1061, "Anjap", 39, 100], [1558, 1097, "अंजप", 36, 82],
  [1412, 1287, "Karjat", 43, 120], [1412, 1326, "कर्जत", 40, 96],
  [1719, 1173, "Bhivpuri", 39, 136], [1717, 1213, "Camp", 39, 96], [1715, 1250, "भिवपुरी", 36, 100], [1722, 1287, "कॅंप", 36, 54],
  [1872, 802, "Shri", 45, 80, 400, "g"], [1856, 849, "Bhimashankar", 45, 264, 400, "g"], [1868, 895, "Jyotirling", 45, 206, 400, "g"],
  [1862, 941, "Wildlife", 45, 158, 400, "g"], [1862, 975, "श्री भीमाशंकर", 32, 156, 400, "g"], [1872, 1012, "ज्योतिर्लिंग", 32, 134, 400, "g"],
  [1880, 1048, "वन्यजीव", 32, 90, 400, "g"], [1880, 1085, "अभयारण्य", 32, 120, 400, "g"],
];
const SHIELDS: [number, number, string, number, boolean?][] = [
  [817, 91, "848", 66], [458, 341, "48", 50], [880, 437, "752", 66], [1288, 361, "752", 66],
  [822, 851, "48", 50], [722, 1163, "348", 66], [658, 1254, "348A", 86], [1218, 1320, "48", 50], [1240, 28, "61", 66], [875, 1366, "66", 50],
  [1525, 77, "79", 60, true], [1588, 328, "79", 60, true], [996, 604, "80", 60, true], [1356, 651, "80", 60, true], [1454, 873, "79", 60, true], [526, 1366, "66", 56, true],
];

const Shield = ({ s: [x, y, t, w, us] }: { s: (typeof SHIELDS)[number] }) => {
  const a = w / 2;
  return (
    <g transform={`translate(${x} ${y})`}>
      <path
        d={us ? `M${-a} -24L${-a + 8} -20L0 -25L${a - 8} -20L${a} -24L${a - 3} 0Q${a + 2} 18 ${a - 12} 20L0 26L${-a + 12} 20Q${-a - 2} 18 ${-a + 3} 0Z`
          : `M${-a} -22Q0 -28 ${a} -22V14Q${a} 19 ${a - 8} 20L0 26L${-a + 8} 20Q${-a} 19 ${-a} 14Z`}
        fill={us ? "#707070" : "#57511c"} stroke={us ? "#2b2b2b" : "#403c1c"} strokeWidth="3" />
      {us && <path d={`M${-a} -24L${-a + 8} -20L0 -25L${a - 8} -20L${a} -24L${a - 2} -12H${-a + 2}Z`} fill="#263b29" />}
      <text y={us ? 11 : 10} textAnchor="middle" fontSize="29" fontWeight="500" fill={us ? "#1d1d1d" : "#12120a"}>{t}</text>
    </g>
  );
};

const Pin = ({ x, y }: { x: number; y: number }) => (
  <g transform={`translate(${x} ${y})`}>
    <path d="M0 .8C8 .8 13.800 6.800 13.800 14.200C13.800 19 11.500 22.500 8 27.500C4 33.500 1.700 38 1.300 46H-1.300C-1.700 38 -4 33.500 -8 27.500C-11.500 22.500 -13.800 19 -13.800 14.200C-13.800 6.800 -8 .8 0 .8Z"
      fill="#f62100" stroke="#fff" strokeWidth="1.200" />
    <circle cy="14.500" r="5.100" fill="#850000" />
  </g>
);

const LETTERS: [string, string][] = [["G", "#4a55f5"], ["o", "#ee2211"], ["o", "#f7c300"], ["g", "#4a55f5"], ["l", "#12b25b"], ["e", "#ee2211"]];

const MapArt = () => (
  <svg width="1210" height="440" viewBox="628 332 1210 440">
    <rect x="628" y="332" width="1210" height="440" fill="#33537a" />
    <g transform="translate(1200 320) scale(.33333)" fontFamily={`Roboto, "Noto Sans Devanagari", "Noto Sans", sans-serif`} strokeLinejoin="round">
      <path fill="#686654" d="M48 30L42 95L60 118L85 155L110 190L150 230L140 290L105 280L108 340L95 370L92 400L108 430L95 480L93 520L108 545L98 580L120 600L110 690L98 715L115 720L112 690L155 660L160 710L190 760L205 810L195 890L205 925L185 950L170 1030L183 1045L165 1085L158 1140L150 1170L125 1215L165 1185L195 1190L200 1240L185 1275L215 1280L240 1265L240 1230L258 1160L250 1110L290 1060L350 1045L350 1080L410 1075L440 1060L480 1040L520 990L570 945L540 910L520 860L530 770L548 700L556 600L572 600L575 700L590 790L575 850L590 900L600 950L625 990L630 1065L690 1065L640 1100L590 1130L515 1135L530 1150L525 1170L500 1200L465 1235L520 1250L522 1270L490 1300L465 1320L470 1300L430 1292L400 1310V1360H1930V30Z" />
      <path fill="#686654" d="M415 1168L450 1150L480 1140L478 1165L440 1180ZM385 1160L395 1165L388 1175Z" />
      {TOWNS.map((d) => <path key={d} d={d} fill="#5d5d5d" />)}
      {GREENS.map((d) => <path key={d} d={d} fill="#45704a" />)}
      {LAKES.map((d) => <path key={d} d={d} fill="#33537a" />)}
      <path fill="#33537a" d="M40 215L150 235L190 230L215 205L270 194L310 202L340 235L365 275L380 305L400 325L440 325L480 300L520 291L552 295L548 312L520 315L480 330L400 338L360 325L300 300L250 270L215 262L180 285L160 290L100 278ZM125 555L150 520L185 470L190 500L150 545L128 570ZM185 990L205 965L230 965L232 985L200 1020H188Z" />
      <path fill="#33537a" d="M600 385L625 440L632 480L620 470L598 400ZM420 300L435 312L425 325ZM515 1134L560 1150L600 1170L595 1178L540 1165ZM150 690L215 620L210 650L150 720Z" />
      <g fill="none" stroke="#66686d" strokeWidth="3">{LANES.map((d) => <path key={d} d={d} />)}</g>
      {WATERWAYS.map(([x, y, ps], i) => (
        <g key={i} transform={`translate(${x} ${y})`} fill="none" stroke="#37587c" strokeWidth={i === 0 ? 8 : 3.600}>{ps.map((d) => <path key={d} d={d} />)}</g>
      ))}
      {["#5d5626", "#7c7429"].map((c, k) =>
        ROADS.map(([x, y, ps], i) => (
          <g key={c + i} transform={`translate(${x} ${y})`} fill="none" stroke={c} strokeWidth={k ? 6 : 10}>{ps.map((d) => <path key={d} d={d} />)}</g>
        ))
      )}
      {SHIELDS.map((s) => <Shield key={`${s[0]}-${s[2]}`} s={s} />)}
      {LABELS.map(([x, y, t, size, w, weight, tone]) => (
        <text key={`${t}${x}`} x={x} y={y} textAnchor="middle" fontSize={size} fontWeight={weight ?? 400} textLength={w} lengthAdjust="spacingAndGlyphs"
          fill={tone ? "#13291b" : "#222325"} stroke={tone ? "#5a6a57" : "#6b6a61"} strokeWidth="4" paintOrder="stroke">{t}</text>
      ))}
    </g>
    <path d="M662.500 332V772M944.500 332V772M1226.500 332V772M1507.500 332V772M1789.500 332V772M628 411.500H1838M628 693.500H1838" stroke="#fff" strokeOpacity=".24" />
    <g fill="#fff" fillOpacity=".45" fontFamily={`"Liberation Sans", Arial, sans-serif`} fontSize="16.800">
      {[406.500, 688.300, 970.300, 1252.200, 1533.500, 1815.500].map((x) => (
        <text key={x} x={x} y="558.200" textLength="231.500" lengthAdjust="spacingAndGlyphs">For development purposes only</text>
      ))}
    </g>
    <Pin x={1299} y={417} /><Pin x={1393.400} y={419} /><Pin x={1287} y={551.500} /><Pin x={1245} y={672} /><Pin x={1281.400} y={667} />
    <text x="634" y="764" fontSize="24" fontFamily={`Lato, Roboto, sans-serif`} fontWeight={700} textLength="69" lengthAdjust="spacingAndGlyphs"
      stroke="#b5c0d0" strokeWidth="4" strokeLinejoin="round" paintOrder="stroke">
      {LETTERS.map(([l, c], i) => <tspan key={i} fill={c}>{l}</tspan>)}
    </text>
  </svg>
);

const nav: [React.ReactNode, number, string, boolean][] = [
  [<FaTachometerAlt size={17.5} />, 23, "Dashboard", false],
  [<Edit />, 18, "My Profile", true],
  [<Users />, 23, "My Network", true],
  [<FaComments size={18} />, 18, "Chat Rooms", false],
  [<FaRegNewspaper size={20} />, 23, "Newsletter", false],
  [<FaRegNewspaper size={20} />, 23, "add review", false],
  [<Users />, 23, "Find other alumni", false],
  [<Edit />, 18, "Your Events", false],
  [<User />, 13, "Friend Requests", false],
  [<User />, 13, "Friends", false],
];

export default function App() {
  return (
    <Desktop>
      <Global />
      <SystemBar>
        <BarLeft>
          <BarText $w={98} $ls={0.35}>Activities</BarText>
          <BarAppIcon><ChromeMark size={15} gray /></BarAppIcon>
          <BarText $ls={-0.05}>Google Chrome</BarText>
          <Caret $ml={6} />
        </BarLeft>
        <BarText $ls={0.1}>{"Jan 24  20:02"}</BarText>
        <Tray>
          <TraySlot $w={28}>
            <svg width="16" height="14" viewBox="0 0 16 14"><path d="M0 3.500Q8 -3 16 3.500L8 14Z" fill="#f0f0ee" /><path d="M1.300 5Q8 0 14.700 5" fill="none" stroke="#1d1d1d" strokeWidth="1" /></svg>
          </TraySlot>
          <TraySlot $w={28}><MdVolumeUp size={17} /></TraySlot>
          <TraySlot $w={27}><MdMic size={18} /></TraySlot>
          <TraySlot $w={31}>
            <svg width="16" height="16" viewBox="0 0 16 16"><path d="M4 3L0 9H2.500L1.500 13L5 7H3Z" fill="#aaa" /><path d="M7.500 2.500H14.500V14.500H7.500ZM9.500 1H12.500" fill="none" stroke="#f0f0ee" strokeWidth="1.200" /><rect x="9" y="4" width="4" height="9" fill="#f0f0ee" /></svg>
          </TraySlot>
          <Caret $ml={3} />
        </Tray>
      </SystemBar>

      <Dock>
        <DockItem $h={31}><Dots /><DockArt $lift={8}><Fox /></DockArt></DockItem>
        {dock.map((d, i) => (
          <DockItem key={i} $on={d.on}>
            <Dots>{Array.from({ length: d.dots }, (_, k) => <Dot key={k} />)}</Dots>
            <DockArt $lift={d.lift}>{d.art}</DockArt>
          </DockItem>
        ))}
        <DockItem $h={71}><Dots /><DockArt><Grid /></DockArt></DockItem>
      </Dock>

      <Browser>
        <TabStrip>
          <Tab>
            <svg width="16" height="16" viewBox="0 0 16 16">
              <rect width="16" height="16" rx="2" fill="#20232a" />
              <g fill="none" stroke="#53b9d1" strokeWidth=".9"><ellipse cx="8" cy="8" rx="6.500" ry="2.500" /><ellipse cx="8" cy="8" rx="6.500" ry="2.500" transform="rotate(60 8 8)" /><ellipse cx="8" cy="8" rx="6.500" ry="2.500" transform="rotate(120 8 8)" /></g>
            </svg>
            <TabTitle>Alumni Dashboard</TabTitle>
            <MdClose size={14} />
          </Tab>
          <NewTab><MdAdd size={20} /></NewTab>
          <WinControls>
            <svg width="16" height="16" viewBox="0 0 16 16"><path d="M4 13H14" stroke="currentColor" strokeWidth="2" /></svg>
            <svg width="16" height="16" viewBox="0 0 16 16"><path d="M6 4H12V9H6ZM4 5V12H11" fill="none" stroke="currentColor" strokeWidth="2" /></svg>
            <MdClose size={16} />
          </WinControls>
        </TabStrip>
        <Toolbar>
          <ToolSlot $w={20}><MdArrowBack size={20} /></ToolSlot>
          <ToolSlot $w={44} $faded><MdArrowForward size={20} /></ToolSlot>
          <ToolSlot $w={20}><MdRefresh size={21} /></ToolSlot>
          <ToolSlot $w={6} />
          <Omnibox>
            <MdInfoOutline size={17} />
            <Url><b>localhost</b>:8000/userlocations</Url>
            <ToolSlot><MdZoomIn size={18} /></ToolSlot>
            <ToolSlot><MdStarBorder size={18} /></ToolSlot>
          </Omnibox>
          <ToolSlot><MdExtension size={18} /></ToolSlot>
          <ToolSlot><MdQueueMusic size={21} /></ToolSlot>
          <ToolSlot><Avatar /></ToolSlot>
          <ToolSlot><MdMoreVert size={20} /></ToolSlot>
        </Toolbar>
        <Bookmarks>
          {marks.map(([icon, text, w, ls], i) => <Bookmark key={i} $w={w} $ls={ls}>{icon}{text}</Bookmark>)}
          <More>»</More>
        </Bookmarks>

        <Page>
          <Navbar>
            <Brand>Alumni Tracker</Brand>
            <Translate>
              <Select>
                Select Language
                <svg width="10" height="7" viewBox="0 0 10 7"><path d="M1 1L5 5.200L9 1" fill="none" stroke="#000" strokeWidth="2" /></svg>
              </Select>
              <Powered>
                Powered by
                <MiniGoogle>{LETTERS.map(([l, c], i) => <Tint key={i} $c={c}>{l}</Tint>)}</MiniGoogle>
                <TranslateWord>Translate</TranslateWord>
              </Powered>
            </Translate>
            <Notice $w={80.5} $gap={16}>
              <IconWithBadge><FaEnvelope size={17.6} /><Badge $c="#3931ff" $x={15} $y={-5} /></IconWithBadge>
              <Angle />
            </Notice>
            <Notice $w={68.5} $gap={16.5}>
              <IconWithBadge><FaBell size={17.6} /><Badge $c="#ffca00" $x={13} $y={-5} /></IconWithBadge>
              <Angle />
            </Notice>
            <SearchBox>Search for...</SearchBox>
            <SearchButton><FaSearch size={16.5} /></SearchButton>
            <Logout>Logout <Glyph d={SIGN_OUT} w={17.6} h={17.6} /></Logout>
          </Navbar>

          <Sidebar>
            {nav.map(([icon, w, label, more]) => (
              <NavItem key={label}>
                <NavIcon $w={w}>{icon}</NavIcon>
                <NavLabel>{label}</NavLabel>
                {more && <Angle />}
              </NavItem>
            ))}
          </Sidebar>
          <Content>
            <Breadcrumb>Internship <span>/</span><Current>Dashboard</Current></Breadcrumb>
            <MapFrame>
              <MapArt />
              <MapButtons $y={11} $h={44}>
                <svg width="44" height="44" viewBox="0 0 44 44"><path d="M13 18.500V13H18.500M25.500 13H31V18.500M31 25.500V31H25.500M18.500 31H13V25.500" fill="none" stroke="#666" strokeWidth="2.200" /></svg>
              </MapButtons>
              <MapButtons $y={325} $h={89}>
                <svg width="44" height="89" viewBox="0 0 44 89"><path d="M12 21.500H31M21.500 12V31M12 67H31" stroke="#666" strokeWidth="4" /><path d="M5 44.500H38" stroke="#e6e6e6" /></svg>
              </MapButtons>
              <Legal>
                <LegalCell $w={94}>Map data ©2021</LegalCell>
                <LegalCell $w={78}>Terms of Use</LegalCell>
              </Legal>
            </MapFrame>
          </Content>
          <Toggle><svg width="9" height="12" viewBox="0 0 9 12"><path d="M7 1L2 6L7 11" fill="none" stroke="currentColor" strokeWidth="2.200" /></svg></Toggle>
          <Footer>Copyright © Alumni 2020</Footer>
        </Page>
      </Browser>
    </Desktop>
  );
}
